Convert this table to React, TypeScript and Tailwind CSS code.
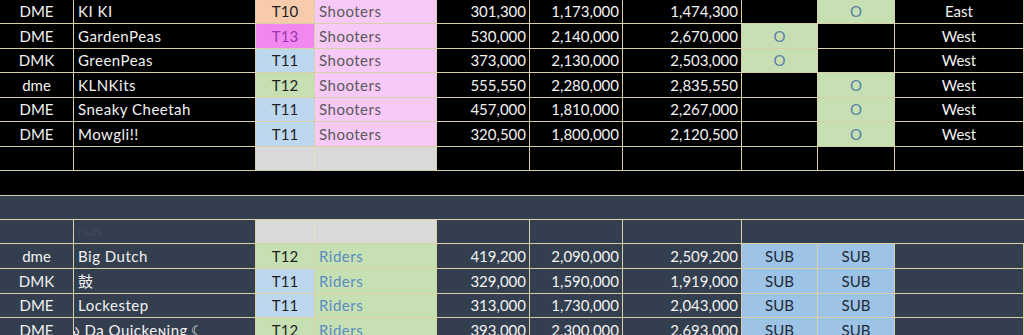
import React from "react";

const tierBg: Record<string, string> = {
  T10: "bg-[#f8cbad] text-[#1e1e1e]",
  T13: "bg-[#f088f0] text-[#9b35b5]",
  T11: "bg-[#bdd7ee] text-[#1e1e1e]",
  T12: "bg-[#c6e0b4] text-[#1e1e1e]",
};

const B = "border-r border-b border-[#d9d0a8]";

type Top = [string, string, string, string, string, string, string, string, string];
const top: Top[] = [
  ["DME", "KI KI", "T10", "301,300", "1,173,000", "1,474,300", "", "O", "East"],
  ["DME", "GardenPeas", "T13", "530,000", "2,140,000", "2,670,000", "O", "", "West"],
  ["DMK", "GreenPeas", "T11", "373,000", "2,130,000", "2,503,000", "O", "", "West"],
  ["dme", "KLNKits", "T12", "555,550", "2,280,000", "2,835,550", "", "O", "West"],
  ["DME", "Sneaky Cheetah", "T11", "457,000", "1,810,000", "2,267,000", "", "O", "West"],
  ["DME", "Mowgli!!", "T11", "320,500", "1,800,000", "2,120,500", "", "O", "West"],
];

type Bot = [string, string, string, string, string, string];
const bot: Bot[] = [
  ["dme", "Big Dutch", "T12", "419,200", "2,090,000", "2,509,200"],
  ["DMK", "鼓", "T11", "329,000", "1,590,000", "1,919,000"],
  ["DME", "Lockestep", "T11", "313,000", "1,730,000", "2,043,000"],
  ["DME", "Da Quickeɴing", "T12", "393,000", "2,300,000", "2,693,000"],
];

function Cell({
  cls,
  children,
  align = "center",
}: {
  cls: string;
  children?: React.ReactNode;
  align?: "center" | "left" | "right";
}) {
  const a =
    align === "center"
      ? "justify-center"
      : align === "left"
      ? "justify-start pl-[4px] tracking-[0.5px]"
      : "justify-end pr-[3px]";
  return <div className={`flex items-center overflow-hidden whitespace-nowrap ${a} ${B} ${cls}`}>{children}</div>;
}

export default function App() {
  return (
    <div className="w-[1024px] h-[335px] overflow-hidden bg-black font-['Lato','Noto_Sans_CJK_SC',sans-serif] text-[15px] leading-none">
      <div className="grid grid-cols-[74px_182px_59px_122px_93px_93px_119px_76px_77px_129px] grid-rows-[24px_25px_24px_25px_24px_25px_24px_25px_24px_24px_25px_25px_24px_25px]">
        {top.map((r, i) => (
          <React.Fragment key={i}>
            <Cell cls="bg-black text-[#f2f2f2]">{r[0]}</Cell>
            <Cell cls="bg-black text-[#f2f2f2]" align="left">{r[1]}</Cell>
            <Cell cls={tierBg[r[2]]}>{r[2]}</Cell>
            <Cell cls="bg-[#f7c9f7] text-[#5a5a5a]" align="left">Shooters</Cell>
            <Cell cls="bg-black text-[#f2f2f2]" align="right">{r[3]}</Cell>
            <Cell cls="bg-black text-[#f2f2f2]" align="right">{r[4]}</Cell>
            <Cell cls="bg-black text-[#f2f2f2]" align="right">{r[5]}</Cell>
            <Cell cls={r[6] ? "bg-[#c6e0b4] text-[#5a7fa6]" : "bg-black"}>{r[6]}</Cell>
            <Cell cls={r[7] ? "bg-[#c6e0b4] text-[#5a7fa6]" : "bg-black"}>{r[7]}</Cell>
            <Cell cls="bg-black text-[#f2f2f2]">{r[8]}</Cell>
          </React.Fragment>
        ))}
        {/* empty row */}
        <Cell cls="bg-black" />
        <Cell cls="bg-black" />
        <Cell cls="bg-[#d9d9d9] border-r-[#e6e0c8]" />
        <Cell cls="bg-[#d9d9d9]" />
        <Cell cls="bg-black" />
        <Cell cls="bg-black" />
        <Cell cls="bg-black" />
        <Cell cls="bg-black" />
        <Cell cls="bg-black" />
        <Cell cls="bg-black" />
        {/* black band */}
        <div className="col-span-10 bg-black border-b border-[#d9d0a8]" />
        {/* slate band */}
        <div className="col-span-10 bg-[#333f4f] border-b border-[#d9d0a8]" />
        {/* header row */}
        <Cell cls="bg-[#333f4f]" />
        <Cell cls="bg-[#333f4f] text-[#3f4b5c] text-[13px]" align="left">nun</Cell>
        <Cell cls="bg-[#d9d9d9] border-r-[#e6e0c8]" />
        <Cell cls="bg-[#d9d9d9]" />
        <Cell cls="bg-[#333f4f]" />
        <Cell cls="bg-[#333f4f]" />
        <Cell cls="bg-[#333f4f]" />
        <div className="col-span-3 bg-[#333f4f] border-b border-[#d9d0a8]" />
        {bot.map((r, i) => (
          <React.Fragment key={"b" + i}>
            <Cell cls="bg-[#333f4f] text-[#f2f2f2]">{r[0]}</Cell>
            <Cell cls="bg-[#333f4f] text-[#f2f2f2] overflow-visible" align="left">
              {i === 3 ? (
                <span className="flex items-center">
                  <span className="-ml-[5px] mr-[4px] text-[13px]">ა</span>
                  {r[1]}
                  <span className="ml-[3px] text-[13px]">☾</span>
                </span>
              ) : (
                r[1]
              )}
            </Cell>
            <Cell cls={tierBg[r[2]]}>{r[2]}</Cell>
            <Cell cls="bg-[#c6e0b4] text-[#5b8cc2]" align="left">Riders</Cell>
            <Cell cls="bg-[#333f4f] text-[#f2f2f2]" align="right">{r[3]}</Cell>
            <Cell cls="bg-[#333f4f] text-[#f2f2f2]" align="right">{r[4]}</Cell>
            <Cell cls="bg-[#333f4f] text-[#f2f2f2]" align="right">{r[5]}</Cell>
            <Cell cls="bg-[#9dc3e6] text-[#1f2a38]">SUB</Cell>
            <Cell cls="bg-[#9dc3e6] text-[#1f2a38]">SUB</Cell>
            <Cell cls="bg-[#333f4f]" />
          </React.Fragment>
        ))}
      </div>
    </div>
  );
}
